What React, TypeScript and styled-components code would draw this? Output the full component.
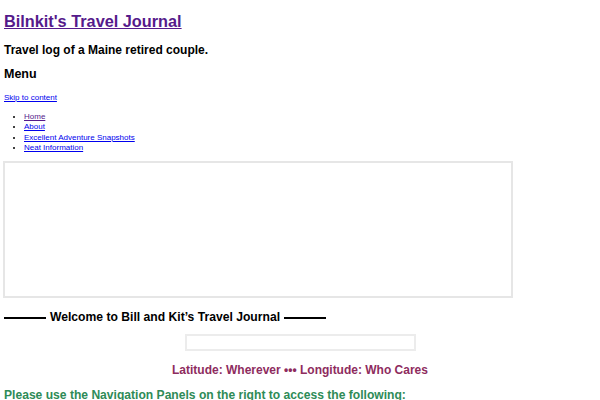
import React from "react"
import styled, { createGlobalStyle } from "styled-components"

const GlobalStyle = createGlobalStyle`
  html, body {
    margin: 0;
    padding: 0;
    background: #ffffff;
  }
  body {
    font-family: "Liberation Sans", Arial, sans-serif;
    color: #000000;
  }
`

const Page = styled.div`
  padding: 0 4px;
  width: 600px;
  box-sizing: border-box;
`

const SiteTitle = styled.h1`
  margin: 11px 0 0 0;
  font-size: 16.3px;
  line-height: 20px;
  font-weight: bold;
  & a {
    color: #551a8b;
    text-decoration: underline;
  }
`

const Tagline = styled.h2`
  margin: 12px 0 0 0;
  font-size: 12px;
  line-height: 15px;
  font-weight: bold;
`

const MenuTitle = styled.h2`
  margin: 9px 0 0 0;
  font-size: 12.5px;
  line-height: 15px;
  font-weight: bold;
`

const SkipLink = styled.a`
  display: block;
  margin-top: 11px;
  font-size: 8px;
  line-height: 10px;
  color: #0000ee;
`

const NavList = styled.ul`
  margin: 9px 0 0 0;
  padding-left: 20px;
  font-size: 8px;
  line-height: 10.33px;
`

const NavLink = styled.a<{ $visited?: boolean }>`
  color: ${p => (p.$visited ? "#551a8b" : "#0000ee")};
`

const HeaderMedia = styled.div`
  margin: 8px 0 0 -1px;
  width: 510px;
  height: 137px;
  box-sizing: border-box;
  border: 2px solid #e6e6e6;
`

const Welcome = styled.h3`
  margin: 12px 0 0 0;
  display: flex;
  align-items: center;
  gap: 4px;
  font-size: 12.15px;
  line-height: 15px;
  font-weight: bold;
  &::before,
  &::after {
    content: "";
    width: 42px;
    height: 1.5px;
    background: #000;
  }
`

const Search = styled.input`
  display: block;
  margin: 9px auto 0 auto;
  width: 231px;
  height: 17px;
  box-sizing: border-box;
  border: 2px solid #ececec;
  padding: 0;
  outline: none;
`

const Coords = styled.p`
  margin: 12px 0 0 0;
  text-align: center;
  font-size: 12px;
  line-height: 15px;
  font-weight: bold;
  color: #8e2c5e;
`

const Notice = styled.p`
  margin: 9px 0 0 0;
  font-size: 12.1px;
  line-height: 16px;
  font-weight: bold;
  color: #2e8b57;
`

export default function App() {
  return (
    <>
      <GlobalStyle />
      <Page>
        <SiteTitle>
          <a href="#">Bilnkit's Travel Journal</a>
        </SiteTitle>
        <Tagline>Travel log of a Maine retired couple.</Tagline>
        <MenuTitle>Menu</MenuTitle>
        <SkipLink href="#">Skip to content</SkipLink>
        <NavList>
          <li>
            <NavLink href="#" $visited>Home</NavLink>
          </li>
          <li>
            <NavLink href="#">About</NavLink>
          </li>
          <li>
            <NavLink href="#">Excellent Adventure Snapshots</NavLink>
          </li>
          <li>
            <NavLink href="#">Neat Information</NavLink>
          </li>
        </NavList>
        <HeaderMedia />
        <Welcome>Welcome to Bill and Kit’s Travel Journal</Welcome>
        <Search type="text" />
        <Coords>Latitude: Wherever ••• Longitude: Who Cares</Coords>
        <Notice>Please use the Navigation Panels on the right to access the following:</Notice>
      </Page>
    </>
  )
}
